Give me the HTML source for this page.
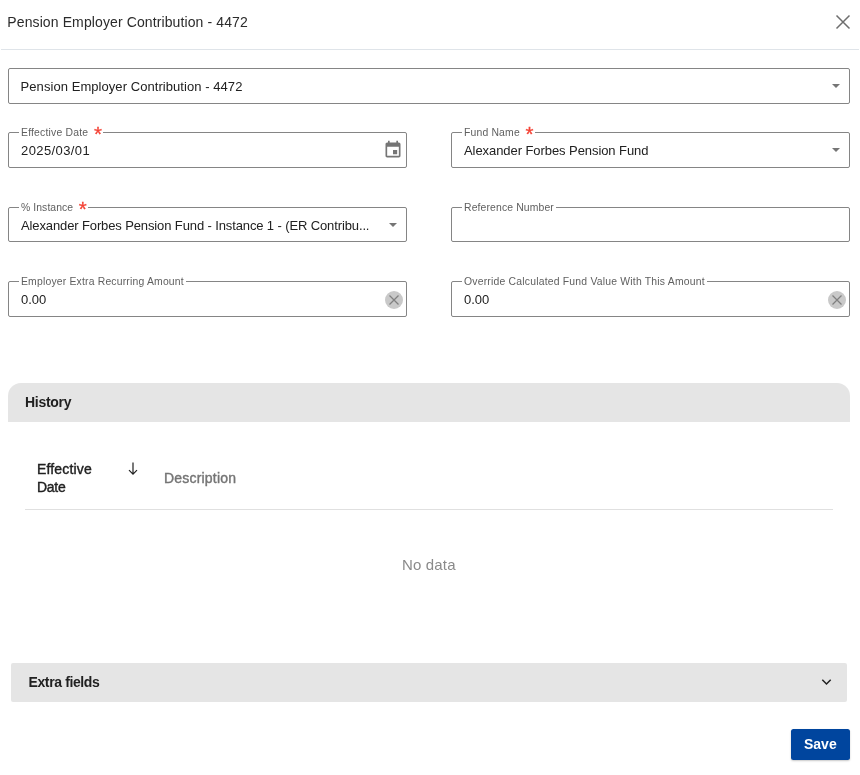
<!DOCTYPE html>
<html lang="en">
<head>
<meta charset="utf-8">
<title>Pension Employer Contribution - 4472</title>
<style>
*{box-sizing:border-box;margin:0;padding:0}
html,body{width:860px;height:775px;background:#fff;overflow:hidden}
body{will-change:transform}
body{position:relative;font-family:"Liberation Sans",Arial,sans-serif;color:#212121;font-size:13px}
.abs{position:absolute;white-space:nowrap}
.title{left:7.3px;top:13px;font-size:14px;line-height:18px;color:#2b2b2b}
.hr{left:1px;top:49px;width:858px;height:1px;background:#dfe4e9}
.field{position:absolute;height:36px;border:1px solid #858585;border-radius:2px;background:#fff}
.field .val{position:absolute;left:12px;top:10px;font-size:13px;line-height:16px;white-space:nowrap;color:#212121}
.field .lbl{position:absolute;left:10px;top:-7px;padding:0 2px 0 2px;background:#fff;font-size:10.4px;line-height:14px;color:#5f5f5f;white-space:nowrap}
.field .lbl.req{padding-right:15px}
.field .lbl b{color:#f44336;font-weight:400;font-size:20.5px;line-height:22px;position:absolute;right:1.4px;top:-2.6px;-webkit-text-stroke:0.3px #f44336}
.tri{position:absolute;width:0;height:0;border-left:4px solid transparent;border-right:4px solid transparent;border-top:4px solid #757575}
.clr{position:absolute;width:18px;height:18px;border-radius:50%;background:#c9c9c9}
.sec{background:#e5e5e5}
.bold{font-weight:700;font-size:14px;line-height:18px;color:#212121}
</style>
</head>
<body>
<div class="abs title" id="t1" style="letter-spacing:0.110px">Pension Employer Contribution - 4472</div>
<svg class="abs" style="left:835px;top:14px" width="16" height="16" viewBox="0 0 16 16"><path d="M1.5 1.5L14.5 14.5M14.5 1.5L1.5 14.5" stroke="#6e6e6e" stroke-width="1.5" fill="none"/></svg>
<div class="abs hr"></div>

<div class="field" style="left:8px;top:68px;width:842px"><span class="val" id="v0" style="left:11.6px;letter-spacing:0.060px">Pension Employer Contribution - 4472</span><i class="tri" style="left:823.4px;top:15px"></i></div>

<div class="field" style="left:8px;top:132px;width:399px"><span class="lbl req"><span class="t" id="l1" style="letter-spacing:0.2px">Effective Date</span><b id="a1">*</b></span><span class="val" id="v1" style="letter-spacing:0.400px">2025/03/01</span>
<svg style="position:absolute;left:374px;top:6.6px" width="20" height="20" viewBox="0 0 24 24"><path fill="#757575" d="M17 12h-5v5h5v-5zM16 1v2H8V1H6v2H5c-1.11 0-1.99.9-1.99 2L3 19c0 1.1.89 2 2 2h14c1.1 0 2-.9 2-2V5c0-1.1-.9-2-2-2h-1V1h-2zm3 18H5V8h14v11z"/></svg></div>

<div class="field" style="left:451px;top:132px;width:399px"><span class="lbl req"><span class="t" id="l2" style="letter-spacing:0.175px">Fund Name</span><b id="a2">*</b></span><span class="val" id="v2" style="letter-spacing:-0.070px">Alexander Forbes Pension Fund</span><i class="tri" style="left:380px;top:15px"></i></div>

<div class="field" style="left:8px;top:207px;width:399px;height:35px"><span class="lbl req"><span class="t" id="l3" style="letter-spacing:0.08px">% Instance</span><b id="a3">*</b></span><span class="val" id="v3" style="letter-spacing:-0.119px">Alexander Forbes Pension Fund - Instance 1 - (ER Contribu...</span><i class="tri" style="left:380px;top:15px"></i></div>

<div class="field" style="left:451px;top:207px;width:399px;height:35px"><span class="lbl"><span class="t" id="l4" style="letter-spacing:0.133px">Reference Number</span></span></div>

<div class="field" style="left:8px;top:281px;width:399px"><span class="lbl"><span class="t" id="l5" style="letter-spacing:0.187px">Employer Extra Recurring Amount</span></span><span class="val" id="v5">0.00</span>
<span class="clr" style="left:376px;top:8.5px"><svg width="18" height="18" viewBox="0 0 18 18" style="display:block"><path d="M4.5 4.5L13.5 13.5M13.5 4.5L4.5 13.5" stroke="#808080" stroke-width="1.25" fill="none"/></svg></span></div>

<div class="field" style="left:451px;top:281px;width:399px"><span class="lbl"><span class="t" id="l6" style="letter-spacing:0.204px">Override Calculated Fund Value With This Amount</span></span><span class="val" id="v6">0.00</span>
<span class="clr" style="left:376px;top:8.5px"><svg width="18" height="18" viewBox="0 0 18 18" style="display:block"><path d="M4.5 4.5L13.5 13.5M13.5 4.5L4.5 13.5" stroke="#808080" stroke-width="1.25" fill="none"/></svg></span></div>

<div class="abs sec" style="left:8px;top:383px;width:842px;height:39px;border-radius:13px 13px 0 0"></div>
<div class="abs bold" id="h1" style="letter-spacing:-0.3px;left:25px;top:393px">History</div>

<div class="abs" id="th1" style="left:37px;top:460px;font-size:14px;line-height:18px;font-weight:400;-webkit-text-stroke:0.4px #212121;color:#212121;white-space:normal;width:80px"><span id="th1a" style="letter-spacing:0.17px">Effective</span><br><span id="th1b" style="letter-spacing:-0.3px">Date</span></div>
<svg class="abs" style="left:127px;top:461px" width="12" height="15" viewBox="0 0 12 15"><path d="M6 1.5V13M2 9.2L6 13.2L10 9.2" stroke="#212121" stroke-width="1.2" fill="none"/></svg>
<div class="abs" id="th2" style="letter-spacing:0.2px;left:164px;top:469px;font-size:14px;line-height:18px;font-weight:400;-webkit-text-stroke:0.4px #757575;color:#757575">Description</div>
<div class="abs" style="left:25px;top:509px;width:808px;height:1px;background:#e0e0e0"></div>
<div class="abs" id="nd" style="letter-spacing:0.167px;left:402px;top:556px;font-size:15px;line-height:18px;color:#8a8a8a">No data</div>

<div class="abs sec" style="left:11px;top:663px;width:836px;height:39px;border-radius:2px"></div>
<div class="abs bold" id="h2" style="letter-spacing:-0.38px;left:28.5px;top:673px">Extra fields</div>
<svg class="abs" style="left:820px;top:676px" width="13" height="12" viewBox="0 0 13 12"><path d="M2.3 3.8L6.5 8L10.7 3.8" stroke="#212121" stroke-width="1.5" fill="none"/></svg>

<div class="abs" style="left:791px;top:729px;width:59px;height:31px;border-radius:2.5px;background:#00459e;box-shadow:0 1px 2px rgba(0,0,0,.22)"></div>
<div class="abs" id="sv" style="left:804px;top:735px;font-size:14px;line-height:18px;font-weight:700;color:#fff">Save</div>
</body>
</html>
